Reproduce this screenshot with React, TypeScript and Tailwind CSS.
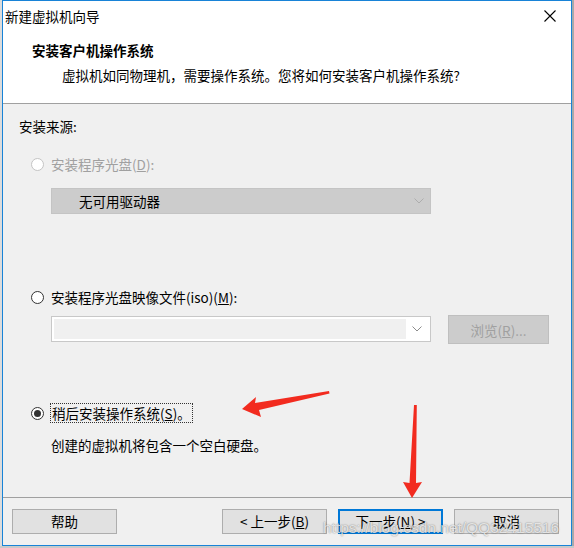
import React from "react";

const cjk = "font-['Noto_Sans_CJK_SC','Noto_Sans',sans-serif]";

function Chevron({ color }: { color: string }) {
  return (
    <svg width="10" height="6" viewBox="0 0 10 6" className="block">
      <path d="M0.5 0.5 L5 5 L9.5 0.5" fill="none" stroke={color} strokeWidth="1" />
    </svg>
  );
}

function Radio({ checked, disabled }: { checked?: boolean; disabled?: boolean }) {
  return (
    <span
      className={`flex h-[13px] w-[13px] shrink-0 items-center justify-center rounded-full border bg-white ${
        disabled ? "border-[#c4c4c4]" : "border-[#333333]"
      }`}
    >
      {checked && <span className="block h-[7px] w-[7px] rounded-full bg-[#333333]" />}
    </span>
  );
}

function Btn({
  children,
  focused,
}: {
  children: React.ReactNode;
  focused?: boolean;
}) {
  return (
    <div
      className={`flex h-[25px] w-[105px] items-center justify-center bg-[#e1e1e1] text-[13.5px] text-black ${
        focused ? "border-2 border-[#0078d7]" : "border border-[#adadad]"
      }`}
    >
      {children}
    </div>
  );
}

export default function App() {
  return (
    <div className={`relative h-[548px] w-[574px] overflow-hidden bg-[#c9c9c9] ${cjk}`}>
      <div className="flex h-[546px] w-[574px]">
        <div className="w-[2px] bg-[#dcdcdc]" />
        <div className="flex h-[546px] w-[570px] flex-col border border-[#1883d7] bg-[#f0f0f0]">
          {/* header */}
          <div className="h-[103px] border-b border-[#a0a0a0] bg-white">
            <div className="flex h-[30px] items-center justify-between">
              <span className="pl-[2px] text-[13.5px] leading-[20px] text-black">新建虚拟机向导</span>
              <svg width="12" height="12" viewBox="0 0 12 12" className="mr-[15px]">
                <path d="M0.5 0.5 L11.5 11.5 M11.5 0.5 L0.5 11.5" stroke="#000" strokeWidth="1.1" />
              </svg>
            </div>
            <div className="mt-[9px] h-[20px] pl-[29px] text-[13.5px] font-bold leading-[20px] text-black">
              安装客户机操作系统
            </div>
            <div className="mt-[5px] h-[20px] pl-[59px] text-[13.5px] leading-[20px] text-black">
              虚拟机如同物理机，需要操作系统。您将如何安装客户机操作系统?
            </div>
          </div>

          {/* body */}
          <div className="flex flex-1 flex-col text-[13.5px] leading-[20px] text-black">
            <div className="mt-[12px] h-[20px] pl-[16px]">安装来源:</div>

            <div className="mt-[18px] flex h-[20px] items-center pl-[28px]">
              <Radio disabled />
              <span className="ml-[7px] text-[#a0a0a0]">
                安装程序光盘(<span className="underline">D</span>):
              </span>
            </div>

            <div className="ml-[48px] mt-[14px] flex h-[26px] w-[380px] items-center justify-between border border-[#c4c4c4] bg-[#cccccc] pl-[27px] pr-[6px]">
              <span>无可用驱动器</span>
              <Chevron color="#adadad" />
            </div>

            <div className="mt-[73px] flex h-[20px] items-center pl-[28px]">
              <Radio />
              <span className="ml-[7px]">
                安装程序光盘映像文件(iso)(<span className="underline">M</span>):
              </span>
            </div>

            <div className="mt-[8px] flex h-[29px] items-start pl-[48px]">
              <div className="mt-[1px] flex h-[26px] w-[380px] border border-[#c8c8c8] bg-white p-[2px]">
                <div className="h-full flex-1 bg-[#f0f0f0]" />
                <div className="flex w-[22px] items-center justify-center">
                  <Chevron color="#8c8c8c" />
                </div>
              </div>
              <div className="ml-[17px] flex h-[29px] w-[101px] items-center justify-center border border-[#bfbfbf] bg-[#cccccc] text-[#a0a0a0]">
                浏览(<span className="underline">R</span>)...
              </div>
            </div>

            <div className="mt-[59px] flex h-[20px] items-center pl-[28px]">
              <Radio checked />
              <span className="ml-[6px] border border-dotted border-[#333333] px-[1px] leading-[18px]">
                稍后安装操作系统(<span className="underline">S</span>)。
              </span>
            </div>

            <div className="mt-[12px] h-[20px] pl-[48px]">创建的虚拟机将包含一个空白硬盘。</div>
          </div>

          {/* footer */}
          <div className="flex h-[48px] items-start justify-between border-t border-[#a0a0a0] pl-[9px] pr-[12px] pt-[11px]">
            <Btn>帮助</Btn>
            <div className="flex gap-[11px]">
              <Btn>
                &lt; 上一步(<span className="underline">B</span>)
              </Btn>
              <Btn focused>
                下一步(<span className="underline">N</span>) &gt;
              </Btn>
              <Btn>取消</Btn>
            </div>
          </div>
        </div>
        <div className="w-[2px] bg-[#a9a9a9]" />
      </div>

      {/* watermark */}
      <div className="pointer-events-none absolute left-[323px] top-[517px] font-['Liberation_Sans',sans-serif] text-[15.5px] leading-[22px] text-white/75 [text-shadow:0_0_1.5px_rgba(0,0,0,0.55)]">
        https://blog.csdn.net/QQ32415516
      </div>

      {/* red arrows */}
      <svg className="pointer-events-none absolute left-0 top-0" width="574" height="548" viewBox="0 0 574 548">
        <polygon
          points="242,409 256,397 255,403 329,391 329.5,393.5 259,410 261,417"
          fill="#f22b1f"
        />
        <polygon
          points="414,405 416.8,405 416,483 422,482 412,498 403,482 409.5,483"
          fill="#f22b1f"
        />
      </svg>
    </div>
  );
}
